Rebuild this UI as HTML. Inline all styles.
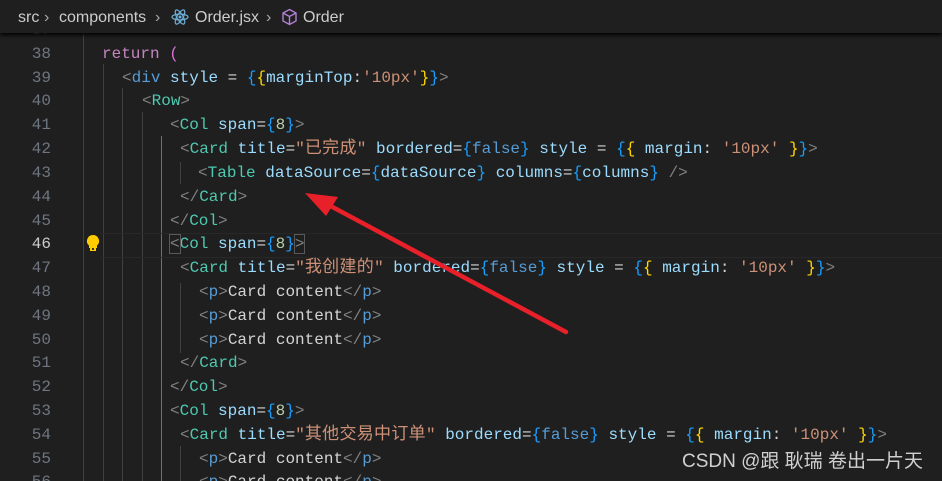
<!DOCTYPE html>
<html style="overflow:hidden;width:942px;height:481px"><head><meta charset="utf-8"><style>
body{margin:0;width:942px;height:481px;overflow:hidden;background:#1f1f1f;position:relative;font-family:"Liberation Mono","Noto Sans CJK SC",monospace;font-size:16px;}
.ln{position:absolute;left:0;width:51px;text-align:right;color:#6e7681;height:24px;line-height:24px;}
.c{position:absolute;height:24px;line-height:24px;white-space:pre;color:#d4d4d4;}
.g{position:absolute;top:33px;width:1px;background:#404040;}
.b{color:#808080}.t{color:#4ec9b0}.h{color:#569cd6}.a{color:#9cdcfe}.s{color:#ce9178}.y{color:#ffd700}.bl{color:#179fff}.p{color:#da70d6}.k{color:#c586c0}.n{color:#b5cea8}
.z{font-family:"Noto Sans CJK SC",sans-serif;font-size:17px;letter-spacing:0.3px;line-height:0;vertical-align:0}
.bar{position:absolute;left:0;top:0;width:942px;height:33px;background:#1f1f1f;box-shadow:0 2px 4px #000;z-index:3;font-family:"Liberation Sans",sans-serif;font-size:16px;color:#cccccc;line-height:35px;}
</style></head><body>
<div class="bar"><span style="position:absolute;left:18px">src</span><span style="position:absolute;left:44px;color:#aaa">›</span><span style="position:absolute;left:59px">components</span><span style="position:absolute;left:155px;color:#aaa">›</span>
<svg style="position:absolute;left:171px;top:9px" width="18" height="16" viewBox="0 0 18 16"><g fill="none" stroke="#6fb1d8" stroke-width="1.2"><ellipse cx="9" cy="8" rx="8" ry="3"/><ellipse cx="9" cy="8" rx="8" ry="3" transform="rotate(60 9 8)"/><ellipse cx="9" cy="8" rx="8" ry="3" transform="rotate(-60 9 8)"/></g><circle cx="9" cy="8" r="1.5" fill="#6fb1d8"/></svg>
<span style="position:absolute;left:195px">Order.jsx</span><span style="position:absolute;left:266px;color:#aaa">›</span>
<svg style="position:absolute;left:281px;top:8px" width="17" height="18" viewBox="0 0 17 18"><g fill="none" stroke="#b180d7" stroke-width="1.4"><path d="M8.5 1.5L15 5v8l-6.5 3.5L2 13V5z"/><path d="M2 5l6.5 3.5L15 5M8.5 8.5v8"/></g></svg>
<span style="position:absolute;left:303px">Order</span></div>
<div class="g" style="left:83px;height:448px"></div><div class="g" style="left:103px;top:64px;height:417px"></div><div class="g" style="left:122px;top:88px;height:393px"></div><div class="g" style="left:142px;top:112px;height:369px"></div><div class="g" style="left:161px;top:136px;height:345px;background:#707070"></div>
<div class="g" style="left:180px;top:162px;height:22px"></div><div class="g" style="left:180px;top:283px;height:70px"></div><div class="g" style="left:180px;top:446px;height:35px"></div>
<div style="position:absolute;left:100px;top:233px;width:842px;height:23px;border-top:1px solid #282828;border-bottom:1px solid #282828"></div>
<div class="ln" style="top:18px">37</div>
<div class="ln" style="top:42px">38</div><div class="c" style="top:42px;left:102px"><span class="k">return</span> <span class="p">(</span></div>
<div class="ln" style="top:66px">39</div><div class="c" style="top:66px;left:122px"><span class="b">&lt;</span><span class="h">div</span> <span class="a">style</span> = <span class="bl">{</span><span class="y">{</span><span class="a">marginTop</span>:<span class="s">'10px'</span><span class="y">}</span><span class="bl">}</span><span class="b">&gt;</span></div>
<div class="ln" style="top:89px">40</div><div class="c" style="top:89px;left:142px"><span class="b">&lt;</span><span class="t">Row</span><span class="b">&gt;</span></div>
<div class="ln" style="top:113px">41</div><div class="c" style="top:113px;left:170px"><span class="b">&lt;</span><span class="t">Col</span> <span class="a">span</span>=<span class="bl">{</span><span class="n">8</span><span class="bl">}</span><span class="b">&gt;</span></div>
<div class="ln" style="top:137px">42</div><div class="c" style="top:137px;left:180px"><span class="b">&lt;</span><span class="t">Card</span> <span class="a">title</span>=<span class="s">"<span class="z">已完成</span>"</span> <span class="a">bordered</span>=<span class="bl">{</span><span class="h">false</span><span class="bl">}</span> <span class="a">style</span> = <span class="bl">{</span><span class="y">{</span> <span class="a">margin</span>: <span class="s">'10px'</span> <span class="y">}</span><span class="bl">}</span><span class="b">&gt;</span></div>
<div class="ln" style="top:161px">43</div><div class="c" style="top:161px;left:198px"><span class="b">&lt;</span><span class="t">Table</span> <span class="a">dataSource</span>=<span class="bl">{</span><span class="a">dataSource</span><span class="bl">}</span> <span class="a">columns</span>=<span class="bl">{</span><span class="a">columns</span><span class="bl">}</span> <span class="b">/&gt;</span></div>
<div class="ln" style="top:185px">44</div><div class="c" style="top:185px;left:180px"><span class="b">&lt;/</span><span class="t">Card</span><span class="b">&gt;</span></div>
<div class="ln" style="top:209px">45</div><div class="c" style="top:209px;left:170px"><span class="b">&lt;/</span><span class="t">Col</span><span class="b">&gt;</span></div>
<div class="ln" style="top:232px;color:#cccccc">46</div>
<svg style="position:absolute;left:86px;top:234px" width="14" height="18" viewBox="0 0 14 18"><path d="M7 1a6 6 0 0 0-4 10.5V14h8v-2.5A6 6 0 0 0 7 1z" fill="#ffcc00"/><rect x="4" y="14" width="6" height="3" fill="#ffcc00"/><rect x="6" y="14" width="2" height="2" fill="#333"/></svg>
<div class="c" style="top:232px;left:170px"><span class="b" style="outline:1px solid #5a5a5a">&lt;</span><span class="t">Col</span> <span class="a">span</span>=<span class="bl">{</span><span class="n">8</span><span class="bl">}</span><span class="b" style="outline:1px solid #5a5a5a">&gt;</span></div>
<div class="ln" style="top:256px">47</div><div class="c" style="top:256px;left:180px"><span class="b">&lt;</span><span class="t">Card</span> <span class="a">title</span>=<span class="s">"<span class="z">我创建的</span>"</span> <span class="a">bordered</span>=<span class="bl">{</span><span class="h">false</span><span class="bl">}</span> <span class="a">style</span> = <span class="bl">{</span><span class="y">{</span> <span class="a">margin</span>: <span class="s">'10px'</span> <span class="y">}</span><span class="bl">}</span><span class="b">&gt;</span></div>
<div class="ln" style="top:280px">48</div><div class="c" style="top:280px;left:199px"><span class="b">&lt;</span><span class="h">p</span><span class="b">&gt;</span>Card content<span class="b">&lt;/</span><span class="h">p</span><span class="b">&gt;</span></div>
<div class="ln" style="top:304px">49</div><div class="c" style="top:304px;left:199px"><span class="b">&lt;</span><span class="h">p</span><span class="b">&gt;</span>Card content<span class="b">&lt;/</span><span class="h">p</span><span class="b">&gt;</span></div>
<div class="ln" style="top:328px">50</div><div class="c" style="top:328px;left:199px"><span class="b">&lt;</span><span class="h">p</span><span class="b">&gt;</span>Card content<span class="b">&lt;/</span><span class="h">p</span><span class="b">&gt;</span></div>
<div class="ln" style="top:351px">51</div><div class="c" style="top:351px;left:180px"><span class="b">&lt;/</span><span class="t">Card</span><span class="b">&gt;</span></div>
<div class="ln" style="top:375px">52</div><div class="c" style="top:375px;left:170px"><span class="b">&lt;/</span><span class="t">Col</span><span class="b">&gt;</span></div>
<div class="ln" style="top:399px">53</div><div class="c" style="top:399px;left:170px"><span class="b">&lt;</span><span class="t">Col</span> <span class="a">span</span>=<span class="bl">{</span><span class="n">8</span><span class="bl">}</span><span class="b">&gt;</span></div>
<div class="ln" style="top:423px">54</div><div class="c" style="top:423px;left:180px"><span class="b">&lt;</span><span class="t">Card</span> <span class="a">title</span>=<span class="s">"<span class="z">其他交易中订单</span>"</span> <span class="a">bordered</span>=<span class="bl">{</span><span class="h">false</span><span class="bl">}</span> <span class="a">style</span> = <span class="bl">{</span><span class="y">{</span> <span class="a">margin</span>: <span class="s">'10px'</span> <span class="y">}</span><span class="bl">}</span><span class="b">&gt;</span></div>
<div class="ln" style="top:447px">55</div><div class="c" style="top:447px;left:199px"><span class="b">&lt;</span><span class="h">p</span><span class="b">&gt;</span>Card content<span class="b">&lt;/</span><span class="h">p</span><span class="b">&gt;</span></div>
<div class="ln" style="top:470px">56</div><div class="c" style="top:470px;left:199px"><span class="b">&lt;</span><span class="h">p</span><span class="b">&gt;</span>Card content<span class="b">&lt;/</span><span class="h">p</span><span class="b">&gt;</span></div>
<svg style="position:absolute;left:0;top:0;z-index:2" width="942" height="481"><line x1="566" y1="332" x2="325" y2="203" stroke="#e8202a" stroke-width="4.5" stroke-linecap="round"/><path d="M305 193L338 197L326 216Z" fill="#e8202a"/></svg>
<div style="position:absolute;left:682px;top:450px;font-family:'Liberation Sans','Noto Sans CJK SC',sans-serif;font-size:19px;color:#d0d0d0;z-index:4;line-height:24px;white-space:nowrap">CSDN @跟 耿瑞 卷出一片天</div>
</body></html>
